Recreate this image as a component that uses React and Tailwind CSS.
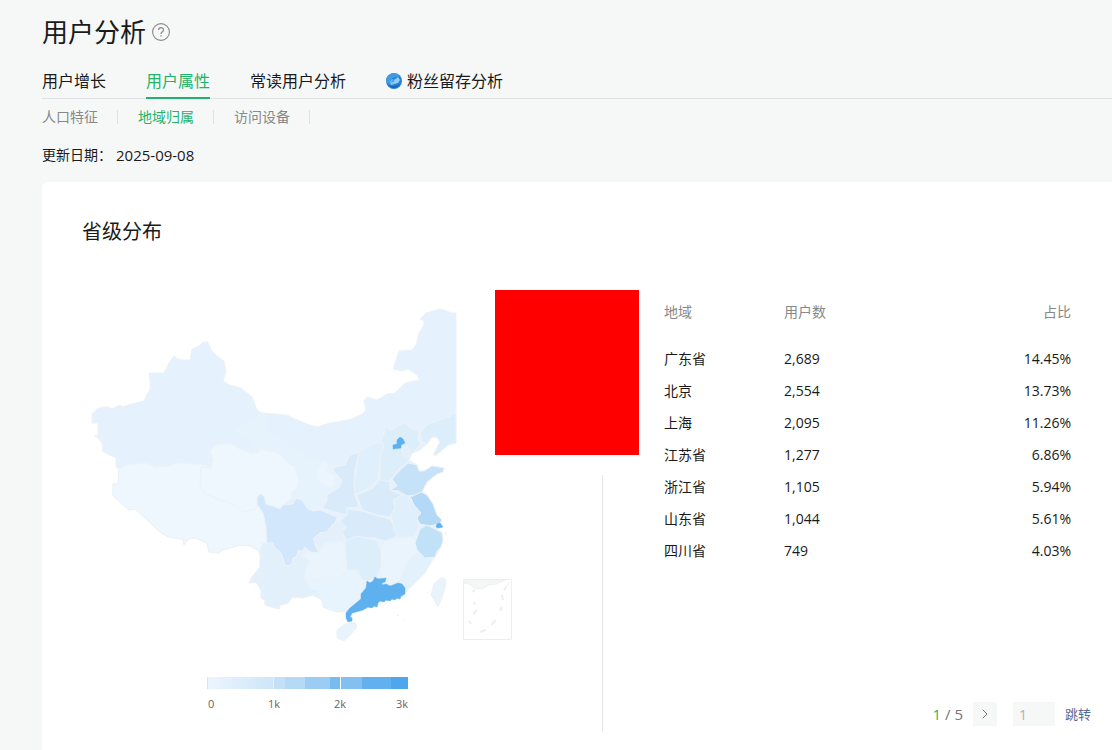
import { useState } from 'react';
import { ChevronRight } from 'lucide-react';

const TABS = [
  { key: 'growth', label: '用户增长' },
  { key: 'attributes', label: '用户属性' },
  { key: 'readers', label: '常读用户分析' },
  { key: 'retention', label: '粉丝留存分析', badge: true },
];

const SUB_TABS = [
  { key: 'people', label: '人口特征' },
  { key: 'region', label: '地域归属' },
  { key: 'device', label: '访问设备' },
];

const ROWS = [
  { region: '广东省', users: '2,689', ratio: '14.45%' },
  { region: '北京', users: '2,554', ratio: '13.73%' },
  { region: '上海', users: '2,095', ratio: '11.26%' },
  { region: '江苏省', users: '1,277', ratio: '6.86%' },
  { region: '浙江省', users: '1,105', ratio: '5.94%' },
  { region: '山东省', users: '1,044', ratio: '5.61%' },
  { region: '四川省', users: '749', ratio: '4.03%' },
];

const TOTAL_PAGES = 5;

const MAINLAND =
  'M92 414L97 409L103 407L108 407L112 409L120 405L123 407L128 405L144 401L147 394L150 390L150 380L149 373L164 373L169 363L174 356L178 359L182 360L190 360L192 349L199 346L203 342L208 342L211 350L217 356L224 361L226 372L223 381L230 385L241 388L252 397L257 410L262 413L287 415L295 419L307 424L317 427L330 423L352 419L362 414L366 410L364 401L367 397L377 400L387 394L395 393L405 383L420 380L417 375L408 369L402 371L393 369L399 351L412 350L416 345L419 333L424 325L424 321L420 319L426 313L440 309L447 311L451 313L456 313L456 443L448 445L435 456L434 454L440 442L437 437L432 437L427 444L420 450L412 453L409 457L409 460L417 465L419 471L424 471L432 466L444 468L443 472L437 474L427 482L422 491L427 495L433 504L437 515L442 520L440 523L442 527L436 529L442 532L443 540L441 547L435 557L431 562L425 573L413 585L405 593L403 597L390 600L378 602L376 606L363 609L352 613L352 621L349 622L347 616L347 611L337 612L323 607L322 600L312 595L303 598L292 597L288 603L280 605L279 609L275 608L265 605L265 600L261 598L261 590L256 582L249 583L252 577L260 567L260 555L258 550L253 548L252 546L240 545L223 550L219 553L209 552L207 543L195 538L188 539L184 545L183 539L168 537L160 532L147 520L135 509L129 510L120 502L113 496L113 484L115 483L118 485L119 469L116 467L116 458L103 452L102 443L97 437L94 436L98 435L98 423L92 423Z';

const PROVINCES = [
  { id: 'xizang', fill: '#eef6fe', d: 'M119 469L128 464L136 464L147 463L155 467L170 466L176 463L187 463L205 465L211 469L201 467L200 485L204 493L215 498L230 503L238 507L243 512L255 509L258 505L264 515L266 527L266 543L260 550L258 550L253 548L252 546L240 545L223 550L219 553L209 552L207 543L195 538L188 539L184 545L183 539L168 537L160 532L147 520L135 509L129 510L120 502L113 496L113 484L118 485Z' },
  { id: 'gansu', fill: '#e6f3fd', d: 'M260 449L278 453L287 462L295 467L299 480L292 492L291 499L297 498L302 500L307 508L320 511L327 502L327 495L340 487L342 480L333 470L335 467L322 468L320 460L310 462L300 455L290 446L275 434L264 432L266 416L262 414L257 420L236 430L252 438L258 448Z' },
  { id: 'qinghai', fill: '#eef6fe', d: 'M201 467L211 468L213 460L210 450L217 445L230 443L240 449L252 454L258 453L260 449L278 453L287 462L295 467L299 480L297 488L292 492L291 499L283 505L280 508L270 506L265 503L264 496L257 496L258 505L255 509L243 512L238 507L230 503L215 498L204 493L200 485Z' },
  { id: 'ningxia', fill: '#ebf5fd', d: 'M322 461L328 464L327 472L334 475L334 486L327 487L318 481L317 472Z' },
  { id: 'sichuan', fill: '#d2e7fb', d: 'M257 497L260 494L264 496L266 504L272 506L280 509L283 505L293 504L296 498L302 500L307 508L313 511L320 510L337 517L335 523L332 525L327 532L320 533L314 538L315 545L319 553L310 552L305 547L302 552L298 550L297 557L293 558L292 564L290 566L287 567L285 565L281 553L275 548L272 542L267 544L266 527L263 513L257 504Z' },
  { id: 'yunnan', fill: '#e2f0fc', d: 'M260 553L262 543L267 544L272 542L275 548L281 553L285 565L290 566L298 553L305 549L302 556L310 560L306 570L305 579L311 588L320 592L312 595L303 598L292 597L288 603L280 605L279 609L265 605L265 600L261 598L261 590L256 582L249 583L252 577L260 567Z' },
  { id: 'guizhou', fill: '#e9f4fd', d: 'M319 553L326 543L334 543L340 541L345 545L347 570L341 577L330 577L316 580L305 579L306 570L310 560L302 556L310 552Z' },
  { id: 'guangxi', fill: '#e7f4fd', d: 'M305 579L316 580L330 577L341 577L347 570L355 572L362 580L367 581L366 590L361 596L355 602L347 611L337 612L323 607L322 600L320 592L311 588Z' },
  { id: 'chongqing', fill: '#e3f0fc', d: 'M335 523L340 521L346 527L342 532L345 541L334 543L326 543L319 549L314 541L314 538L320 533L327 532Z' },
  { id: 'shaanxi', fill: '#d9eafb', d: 'M359 452L355 470L354 482L355 495L359 507L347 508L347 515L335 512L322 508L327 502L327 495L340 487L342 480L333 470L335 467L345 465L350 455Z' },
  { id: 'shanxi', fill: '#e0effc', d: 'M359 452L365 447L380 442L384 446L380 458L379 470L377 480L372 487L355 495L354 482L356 470Z' },
  { id: 'hebei', fill: '#ddeefb', d: 'M384 427L391 430L397 427L405 422L410 428L417 430L419 433L418 440L421 444L412 453L409 460L402 466L392 478L388 482L380 480L380 458L384 446L381 441L384 435Z' },
  { id: 'liaoning', fill: '#dcedfb', d: 'M456 415L453 413L450 417L440 420L427 425L420 433L422 441L427 444L432 437L437 437L440 442L434 454L435 456L448 445L456 443Z' },
  { id: 'henan', fill: '#d9eafb', d: 'M380 480L390 482L390 490L402 495L393 500L395 508L390 517L378 515L362 510L357 495L372 489Z' },
  { id: 'hubei', fill: '#d9ebfa', d: 'M347 509L362 511L378 516L390 519L396 530L397 536L385 541L375 538L360 538L347 541L342 532L346 527L340 521L347 515Z' },
  { id: 'hunan', fill: '#ddeefb', d: 'M345 541L357 536L376 540L381 550L382 565L377 577L375 578L367 581L362 580L357 570L347 570Z' },
  { id: 'jiangxi', fill: '#e9f4fd', d: 'M381 550L385 542L400 538L412 537L417 543L418 552L408 560L402 575L398 583L386 583L382 578Z' },
  { id: 'fujian', fill: '#e3f1fd', d: 'M418 552L425 558L431 562L425 573L413 585L405 592L403 585L398 583L402 575L408 560Z' },
  { id: 'anhui', fill: '#dfeffc', d: 'M402 495L411 498L414 505L421 513L417 518L419 527L415 536L400 538L394 530L391 515L395 508L393 500Z' },
  { id: 'shandong', fill: '#c5e2f9', d: 'M390 490L397 486L392 479L402 468L408 463L417 465L419 471L424 471L432 466L444 468L443 472L437 474L427 482L422 492L415 495L405 496L399 491Z' },
  { id: 'jiangsu', fill: '#b4d9f7', d: 'M402 493L407 497L413 496L421 492L427 495L433 504L437 515L442 520L439 524L430 526L420 524L417 518L421 513L414 505L411 498Z' },
  { id: 'zhejiang', fill: '#c1e1f8', d: 'M420 529L427 525L435 529L442 533L443 540L441 547L437 551L435 557L425 558L417 550L415 543Z' },
  { id: 'tianjin', fill: '#e3f0fc', d: 'M402 447L407 445L410 452L408 458L403 456Z' },
  { id: 'hainan', fill: '#e8f3fc', d: 'M345 624L355 622L357 627L351 634L344 641L337 638L337 630Z' },
  { id: 'taiwan', fill: '#e9f3fb', d: 'M442 577L446 580L445 588L441 600L438 607L435 602L431 595L434 584Z' },
  { id: 'guangdong', fill: '#5fb0ef', d: 'M367 581L370 583L373 581L375 577L378 579L386 578L385 582L382 583L382 585L386 584L390 586L393 585L398 583L402 584L405 588L405 594L401 596L400 599L397 598L395 600L392 599L390 601L386 600L384 602L380 601L378 603L377 607L374 606L372 608L368 607L363 610L356 612L352 613L350 617L352 618L352 621L348 622L346 618L346 613L350 608L361 599L361 594L366 588Z' },
  { id: 'beijing', fill: '#5fb0ef', d: 'M397 440L400 437L403 439L405 443L401 445L401 448L393 449L393 445L397 444Z' },
  { id: 'shanghai', fill: '#5fb0ef', d: 'M437 524L440 523L443 527L438 528L436 527Z' },
];

function ProvinceMap() {
  return (
    <svg viewBox="82 300 440 350" className="block h-[350px] w-[440px]" role="img" aria-label="省级分布">
      <g stroke="#edf2f7" strokeWidth="1" strokeLinejoin="round">
        <path d={MAINLAND} fill="#e5f2fd" />
        {PROVINCES.map((province) => (
          <path
            key={province.id}
            d={province.d}
            fill={province.fill}
            stroke={province.fill === '#5fb0ef' ? '#5fb0ef' : undefined}
            strokeWidth={province.fill === '#5fb0ef' ? 0.5 : 1}
          />
        ))}
        <path d="M397 616L399 615M404 619L405 619M445 535L446 532M427 593L428 592" fill="none" stroke="#e8edf2" />
      </g>
      {/* South China Sea inset */}
      <g fill="none" stroke="#eeeeee">
        <path d="M463.5 579.5H511.5V639.5H463.5Z" strokeWidth="1" />
        <path d="M464 580H505L496 584L488 585L482 589L475 588L469 584L464 583Z" fill="#f4f6f7" stroke="#f0f0f0" />
        <path d="M510 582L505 588" strokeWidth="1" />
        <path
          d="M472 592L475 590M474 602L475 605M477 610L473 614M469 621L471 624M480 632L486 630M491 625L496 620M500 611L502 607M503 600L502 595M504 590L506 587"
          strokeWidth="2"
        />
      </g>
    </svg>
  );
}

function MapLegend() {
  return (
    <div className="ml-[125px] mt-[27px] w-[201px]">
      <div className="flex h-3">
        <div className="w-[66px] border-l border-[#dbe4ec] bg-gradient-to-r from-[#ebf5fe] to-[#cfe5fa]" />
        <div className="w-3 border-l border-[#e4f0fa] bg-[#c3e0f8]" />
        <div className="w-5 bg-[#b5daf6]" />
        <div className="w-[25px] bg-[#9bccf4]" />
        <div className="w-[10px] bg-[#78bbef]" />
        <div className="w-[22px] border-l border-white bg-[#81c0f1]" />
        <div className="w-[29px] bg-[#62b0ee]" />
        <div className="flex-1 bg-[#4fa6ed]" />
      </div>
      <div className="mt-[7px] flex text-[11px] leading-4 text-[#666]">
        <span className="w-[61px] pl-px">0</span>
        <span className="w-[66px]">1k</span>
        <span>2k</span>
        <span className="ml-auto">3k</span>
      </div>
    </div>
  );
}

function RetentionBadge() {
  return (
    <svg viewBox="0 0 16 16" className="mr-[5px] h-4 w-4" aria-hidden="true">
      <circle cx="8" cy="8" r="8" fill="#2b82d1" />
      <path d="M0 8A8 8 0 0 1 14 3L6 5L3 12Z" fill="#409be5" />
      <path d="M4 9L6 6L8 7L12 4L14 7L12 10L8 11L5 12Z" fill="#8fcdf7" />
      <path d="M6 6L8 7L8 9L5 10Z" fill="#4da3e6" />
      <path d="M1 11Q7 15 14 11Q11 16 6 15Z" fill="#1768b5" />
    </svg>
  );
}

function HelpIcon() {
  return (
    <svg viewBox="0 0 18 18" className="h-[18px] w-[18px]" fill="none" stroke="currentColor" aria-hidden="true">
      <circle cx="9" cy="9" r="8.4" strokeWidth="1.1" />
      <path d="M6.6 7.1C6.6 3.9 11.5 4 11.5 6.9C11.5 8.7 9 8.8 9 11" strokeWidth="1.2" />
      <path d="M9 12.2V13.5" strokeWidth="1.3" />
    </svg>
  );
}

function RegionTable() {
  return (
    <table className="w-full table-fixed border-collapse text-sm text-[#1a1a1a]">
      <thead>
        <tr className="text-[#888]">
          <th className="w-[120px] p-0 pb-[19px] text-left font-normal leading-6">地域</th>
          <th className="p-0 pb-[19px] text-left font-normal leading-6">用户数</th>
          <th className="p-0 pb-[19px] text-right font-normal leading-6">占比</th>
        </tr>
      </thead>
      <tbody>
        {ROWS.map((row) => (
          <tr key={row.region} className="h-8">
            <td className="p-0">{row.region}</td>
            <td className="p-0">{row.users}</td>
            <td className="p-0 text-right">{row.ratio}</td>
          </tr>
        ))}
      </tbody>
    </table>
  );
}

function Pagination() {
  const [page, setPage] = useState(1);
  const [target, setTarget] = useState('1');

  const jump = () => {
    const next = Number(target);
    if (next >= 1 && next <= TOTAL_PAGES) {
      setPage(next);
    }
  };

  return (
    <div className="mt-auto flex items-center justify-end pb-1.5 text-[15px] leading-6 text-[#777]">
      <span>
        <span className="text-[#2fb45f]">{page}</span> / {TOTAL_PAGES}
      </span>
      <button
        type="button"
        aria-label="下一页"
        onClick={() => setPage(Math.min(page + 1, TOTAL_PAGES))}
        className="ml-2.5 flex h-6 w-6 items-center justify-center bg-[#f6f7f7]"
      >
        <ChevronRight size={16} strokeWidth={1.5} />
      </button>
      <input
        type="text"
        aria-label="页码"
        value={target}
        onChange={(event) => setTarget(event.target.value)}
        className="ml-4 h-6 w-[42px] bg-[#f6f7f7] px-1.5 text-sm text-[#b2b2b2] outline-none"
      />
      <button type="button" onClick={jump} className="ml-2.5 text-[13px] leading-6 text-[#576b95]">
        跳转
      </button>
    </div>
  );
}

function App() {
  const [activeTab, setActiveTab] = useState('attributes');
  const [activeSub, setActiveSub] = useState('region');

  return (
    <div className="flex min-h-screen flex-col bg-[#f6f8f8] pl-[42px] font-['Open_Sans','Noto_Sans_CJK_SC',sans-serif] text-[#1a1a1a]">
      <header className="flex items-center gap-1.5 pt-3">
        <h1 className="text-[26px] leading-10">用户分析</h1>
        <button type="button" aria-label="帮助" className="text-[#888]">
          <HelpIcon />
        </button>
      </header>

      <nav className="mt-3 flex gap-10 border-b border-[#dfe1e2]">
        {TABS.map((tab) => (
          <button
            key={tab.key}
            type="button"
            onClick={() => setActiveTab(tab.key)}
            className={`-mb-px flex h-[35px] items-center border-b-2 text-base ${
              tab.key === activeTab ? 'border-[#22b26b] text-[#22b26b]' : 'border-transparent'
            }`}
          >
            {tab.badge ? <RetentionBadge /> : null}
            {tab.label}
          </button>
        ))}
      </nav>

      <nav className="mt-2 flex text-sm leading-5 text-[#888]">
        {SUB_TABS.map((tab) => (
          <div key={tab.key} className="mr-5 flex items-center">
            <button
              type="button"
              onClick={() => setActiveSub(tab.key)}
              className={tab.key === activeSub ? 'text-[#22b26b]' : ''}
            >
              {tab.label}
            </button>
            <span className="ml-[19px] h-3.5 w-px bg-[#dfe1e2]" />
          </div>
        ))}
      </nav>

      <p className="mt-[18px] flex items-center text-sm leading-5">
        <span>更新日期：</span>
        <span className="ml-1 text-[15px]">2025-09-08</span>
      </p>

      <main className="mt-[17px] flex-1 rounded-tl-md bg-white pb-[18px] pl-10 pr-[21px] pt-9">
        <h2 className="text-xl leading-7">省级分布</h2>
        <div className="relative mt-11 flex">
          <div className="w-[520px] shrink-0 pt-2.5">
            <ProvinceMap />
            <MapLegend />
          </div>
          <div className="mt-[185px] h-[257px] w-px shrink-0 bg-[#e7e7e9]" />
          <div className="flex min-w-0 flex-1 flex-col pl-[61px] pt-2.5">
            <div className="pr-5">
              <RegionTable />
            </div>
            <Pagination />
          </div>
          <div className="absolute left-[413px] top-0 h-[165px] w-36 bg-[#ff0000]" />
        </div>
      </main>
    </div>
  );
}

export default App;
